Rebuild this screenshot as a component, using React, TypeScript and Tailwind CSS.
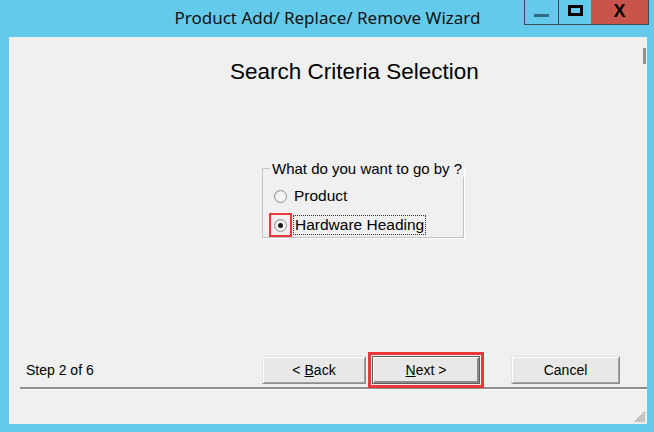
import React from "react";

function Radio({ checked }: { checked?: boolean }) {
  return (
    <span className="relative inline-flex h-[13px] w-[13px] shrink-0 items-center justify-center rounded-full border border-[#8e8f8f] bg-gradient-to-br from-[#dcdcdc] to-[#ffffff]">
      <span className="h-[9px] w-[9px] rounded-full bg-[#f4f4f4] flex items-center justify-center">
        {checked && <span className="h-[5px] w-[5px] rounded-full bg-[#1a1a1a]" />}
      </span>
    </span>
  );
}

function Btn({ children, def, className }: { children: React.ReactNode; def?: boolean; className?: string }) {
  return (
    <div
      className={
        "flex h-[28px] items-center justify-center bg-[#e8e8e8] text-[14px] text-black " +
        (def
          ? "border border-[#5f5f5f] shadow-[inset_1px_1px_0_#ffffff,inset_-2px_-2px_0_#8a8a8a] "
          : "border border-t-[#e3e3e3] border-l-[#e3e3e3] border-r-[#8d8d8d] border-b-[#8d8d8d] shadow-[inset_1px_1px_0_#ffffff,inset_-1px_-1px_0_#a0a0a0] ") +
        (className ?? "")
      }
    >
      {children}
    </div>
  );
}

export default function App() {
  return (
    <div
      className="flex h-[432px] w-[654px] flex-col bg-[#64caeb] overflow-hidden"
      style={{ fontFamily: '"Liberation Sans", Arial, sans-serif' }}
    >
      {/* Title bar */}
      <div className="relative h-[37px] shrink-0">
        <div
          className="absolute left-0 right-0 top-[6px] text-center text-[17px] leading-[24px] text-[#111] pl-[1px]"
          style={{ fontFamily: '"Noto Sans", "Open Sans", sans-serif' }}
        >
          Product Add/ Replace/ Remove Wizard
        </div>
        <div className="absolute right-[5px] top-0 flex h-[25px] border border-t-0 border-[#3a4953]">
          <div className="flex w-[34px] items-end justify-center pb-[7px] border-r border-[#3a4953]">
            <div className="h-[3px] w-[15px] bg-[#2f6c84]" />
          </div>
          <div className="flex w-[32px] items-center justify-center">
            <div className="h-[11px] w-[15px] border-[3px] border-black -mt-[3px]" />
          </div>
          <div className="flex w-[57px] items-center justify-center bg-[#c8544c]">
            <span className="text-[18px] font-bold leading-none text-black -mt-[2px]">X</span>
          </div>
        </div>
      </div>

      {/* Client area */}
      <div className="relative mb-[8px] ml-[9px] mr-[7px] flex flex-1 flex-col bg-[#f0f0f0]">
        <div className="absolute right-[1px] top-[11px] h-[16px] w-[3px] bg-[#8f8f8f]" />
        <div className="pt-[22px] pl-[221px] text-[22.5px] leading-[26px] text-black">
          Search Criteria Selection
        </div>

        <fieldset className="ml-[253px] mt-[75px] w-[202px] h-[78px] border border-[#c4c4c4] shadow-[1px_1px_0_#ffffff] px-[8px] min-w-0">
          <legend className="ml-[-1px] px-[2px] text-[15px] leading-[17px] text-black whitespace-nowrap">
            What do you want to go by ?
          </legend>
          <div className="mt-[10px] flex items-center gap-[7px] pl-[3px] text-[15.5px] leading-[18px]">
            <Radio />
            <span>Product</span>
          </div>
          <div className="mt-[10px] flex items-center pl-[3px] text-[15.5px] leading-[18px]">
            <span className="relative inline-flex">
              <Radio checked />
              <span className="absolute -left-[5px] -top-[6px] h-[24px] w-[23px] border-[2px] border-[#e8383b]" />
            </span>
            <span className="ml-[6px] border border-dotted border-[#333] px-[1px] leading-[18px] whitespace-nowrap">
              Hardware Heading
            </span>
          </div>
        </fieldset>

        <div className="mt-auto">
          <div className="flex items-center">
            <div className="pl-[17px] w-[253px] text-[14px] leading-[16px] text-black">Step 2 of 6</div>
            <Btn className="w-[104px]">
              &lt; <span className="underline ml-[4px]">B</span>ack
            </Btn>
            <div className="relative z-10 ml-[2px] border-[3px] border-[#e8383b] p-[1px]">
              <Btn def className="w-[108px]">
                <span className="underline">N</span>ext &gt;
              </Btn>
            </div>
            <Btn className="ml-[27px] w-[109px]">Cancel</Btn>
          </div>
          <div className="ml-[11px] -mt-[1px] h-[3px] bg-[#8e8e8e] border-b border-white" />
          <div className="h-[34px]" />
        </div>
        <svg className="absolute bottom-[1px] right-[1px]" width="12" height="12" viewBox="0 0 12 12">
          <path d="M11 1 L1 11 M11 4 L4 11 M11 7 L7 11 M11 10 L10 11" stroke="#a9a9a9" strokeWidth="1.3" />
        </svg>
      </div>
    </div>
  );
}
